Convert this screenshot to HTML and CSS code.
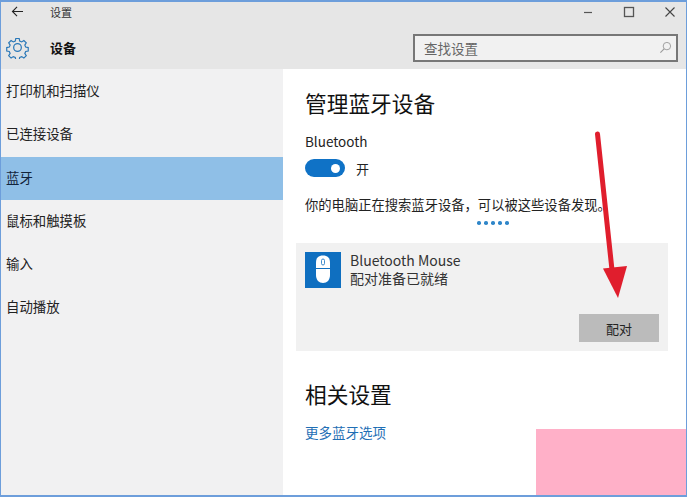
FILE: index.html
```html
<!DOCTYPE html>
<html lang="zh">
<head>
<meta charset="utf-8">
<title>设置</title>
<link rel="stylesheet" href="styles.css">
</head>
<body>
<div class="window">
  <header class="head">
    <div class="titlebar">
      <svg class="back" viewBox="0 0 14 12" width="13" height="11"><path d="M13 6H1.500M6.500 1L1.500 6l5 5" fill="none" stroke="#222" stroke-width="1.200"/></svg>
      <span class="title">设置</span>
      <div class="winbtns">
        <svg viewBox="0 0 12 12" width="12" height="12"><path d="M2 6.500h8" stroke="#555" stroke-width="1.200"/></svg>
        <svg viewBox="0 0 12 12" width="12" height="12"><rect x="1.500" y="1.500" width="9" height="9" fill="none" stroke="#555" stroke-width="1.300"/></svg>
        <svg viewBox="0 0 12 12" width="12" height="12"><path d="M1.500 1.500l9 9M10.500 1.500l-9 9" stroke="#444" stroke-width="1.100"/></svg>
      </div>
    </div>
    <div class="subbar">
      <svg class="gear" viewBox="0 0 24 24" width="23" height="23"><path d="M10 1.500h4l.6 3 2.300 1 2.600-1.700 2.800 2.800-1.700 2.600 1 2.300 3 .6v4l-3 .6-1 2.300 1.700 2.600-2.800 2.800-2.600-1.700-2.300 1-.6 3h-4l-.6-3-2.300-1-2.600 1.700-2.800-2.800 1.700-2.600-1-2.300-3-.6v-4l3-.6 1-2.300-1.700-2.600 2.800-2.800 2.600 1.700 2.300-1z" transform="translate(1.300 1.300) scale(.89)" fill="none" stroke="#2a78b8" stroke-width="1.400"/><circle cx="12" cy="12" r="4" fill="none" stroke="#2a78b8" stroke-width="1.300"/></svg>
      <span class="section">设备</span>
      <div class="search">
        <span>查找设置</span>
        <svg viewBox="0 0 14 14" width="13" height="13"><circle cx="8.500" cy="5.500" r="4" fill="none" stroke="#999" stroke-width="1"/><path d="M5.500 8.500L1.500 12.500" stroke="#999" stroke-width="1.200"/></svg>
      </div>
    </div>
  </header>
  <div class="body">
    <nav class="side">
      <div class="item">打印机和扫描仪</div>
      <div class="item">已连接设备</div>
      <div class="item active">蓝牙</div>
      <div class="item">鼠标和触摸板</div>
      <div class="item">输入</div>
      <div class="item">自动播放</div>
    </nav>
    <main class="main">
      <h1 class="h1">管理蓝牙设备</h1>
      <div class="label">Bluetooth</div>
      <div class="toggle-row">
        <span class="toggle"><span class="knob"></span></span>
        <span>开</span>
      </div>
      <p class="desc">你的电脑正在搜索蓝牙设备，可以被这些设备发现。</p>
      <div class="dots"><i></i><i></i><i></i><i></i><i></i></div>
      <section class="card">
        <div class="device">
          <span class="tile">
            <svg viewBox="0 0 36 36" width="36" height="36"><path d="M18 3.500c-4.500 0-7 2.500-7 7V23c0 5 3 8 7 8s7-3 7-8V10.500c0-4.500-2.500-7-7-7z" fill="#fff"/><path d="M11 16.500h14" stroke="#0f6fc0" stroke-width="1"/><rect x="16.500" y="7" width="3" height="6" rx="1.500" fill="#fff" stroke="#0f6fc0" stroke-width=".8"/></svg>
          </span>
          <div class="device-text">
            <div>Bluetooth Mouse</div>
            <div>配对准备已就绪</div>
          </div>
        </div>
        <div class="actions"><button class="pair">配对</button></div>
      </section>
      <h2 class="h1 related">相关设置</h2>
      <a class="link">更多蓝牙选项</a>
    </main>
  </div>
  <svg class="arrow" viewBox="0 0 687 497" width="687" height="497"><path d="M597.500 134L612 270" stroke="#e01e2d" stroke-width="5" stroke-linecap="round" fill="none"/><path d="M603 268.500L627 266L618 298z" fill="#e01e2d"/></svg>
  <div class="mask"></div>
</div>
</body>
</html>
```
FILE: styles.css
```css
* { box-sizing: border-box; }
html, body { margin: 0; padding: 0; }
body {
  width: 687px;
  height: 497px;
  overflow: hidden;
  font-family: "Noto Sans CJK SC", "Liberation Sans", sans-serif;
  color: #222;
  background: #fff;
}
.window {
  position: relative;
  width: 687px;
  height: 497px;
  border: 1px solid #6d9edb;
  border-top-width: 2px;
  border-bottom-width: 2px;
  background: #fff;
  overflow: hidden;
}
.head { height: 67px; background: #e6e6e6; }
.titlebar { display: flex; align-items: center; height: 20px; padding-left: 10px; }
.back { margin-right: 26px; margin-bottom: 2px; }
.title { font-size: 11px; color: #333; }
.winbtns { margin-left: auto; display: flex; gap: 29px; padding-right: 10px; }
.subbar { display: flex; align-items: center; height: 47px; padding: 4px 8px 0 5px; }
.gear { margin-right: 21px; }
.section { font-size: 13px; font-weight: 700; color: #111; }
.search {
  margin-left: auto;
  width: 265px;
  height: 28px;
  border: 2px solid #777;
  background: #f1f1f1;
  display: flex;
  align-items: center;
  justify-content: space-between;
  padding: 0 4px 0 9px;
  font-size: 13.500px;
  color: #666;
}
.body { display: flex; height: 426px; }
.side { width: 282px; background: #f1f1f2; padding-top: 1px; }
.item {
  height: 43.250px;
  line-height: 40px;
  padding-left: 5px;
  font-size: 13.400px;
  color: #222;
}
.active { background: #8fbfe7; color: #13243a; }
.main { flex: 1; padding: 15px 0 0 22px; font-size: 13.500px; }
.h1 { margin: 0; font-size: 21.700px; line-height: 38px; font-weight: 400; color: #111; }
.label { margin-top: 9px; line-height: 20px; }
.toggle-row { display: flex; align-items: center; gap: 11px; margin-top: 8px; height: 18px; font-size: 13px; }
.toggle {
  display: flex;
  align-items: center;
  justify-content: flex-end;
  width: 40px;
  height: 18px;
  border-radius: 9px;
  background: #0f72c6;
  padding-right: 5px;
}
.knob { width: 9px; height: 9px; border-radius: 50%; background: #fff; }
.desc { margin: 18px 0 0; line-height: 20px; font-size: 13.300px; white-space: nowrap; color: #222; }
.dots { display: flex; gap: 3.500px; margin: 6px 0 0 172px; height: 4px; }
.dots i { width: 3.500px; height: 3.500px; border-radius: 50%; background: #2f86c9; }
.card {
  width: 372px;
  height: 108px;
  margin: 18px 0 0 -9px;
  background: #f1f1f1;
  padding: 9px 9px 0;
}
.device { display: flex; gap: 9px; }
.tile { display: block; width: 36px; height: 36px; background: #0f6fc0; }
.device-text { line-height: 18px; font-size: 14px; color: #333; margin-top: -1px; }
.actions { display: flex; justify-content: flex-end; margin-top: 26px; }
.pair {
  width: 80px;
  height: 28px;
  border: 0;
  background: #bbb;
  color: #222;
  font: inherit;
  font-size: 13px;
}
.related { margin-top: 24px; }
.link { display: block; margin-top: 9px; color: #1f6fb5; font-size: 13.500px; line-height: 20px; }
.arrow { position: absolute; left: -1px; top: -2px; }
.mask { position: absolute; right: 0; bottom: 0; width: 150px; height: 66px; background: #ffb0c8; }
```
